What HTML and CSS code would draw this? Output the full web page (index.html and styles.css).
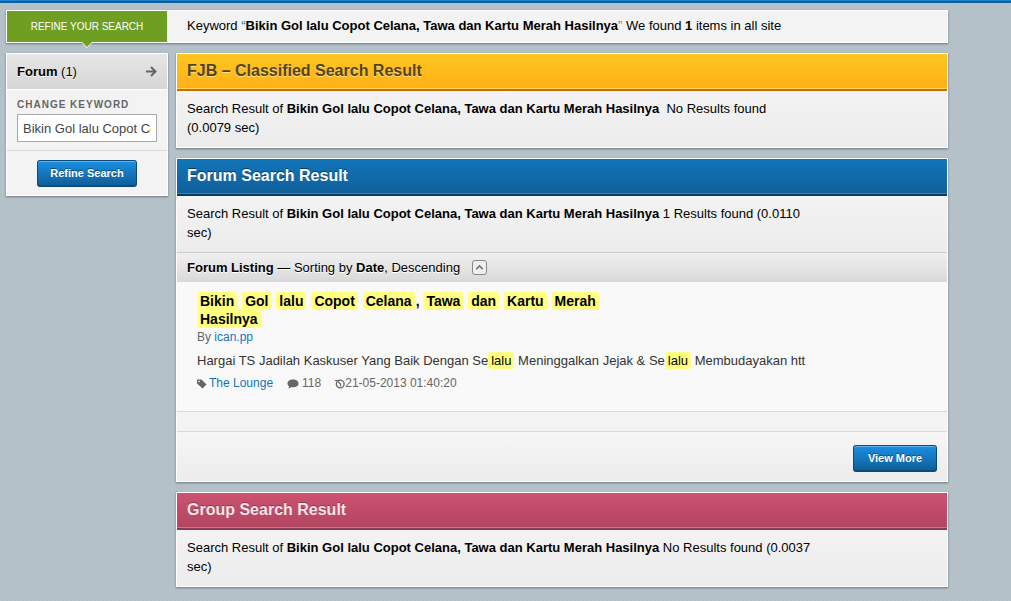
FILE: index.html
```
<!DOCTYPE html>
<html lang="id">
<head>
<meta charset="utf-8">
<meta name="viewport" content="width=device-width, initial-scale=1">
<title>Search Result</title>
<link rel="stylesheet" href="styles.css">
</head>
<body>
<div class="topbar"></div>
<div class="page">
  <header class="summary panel">
    <h2 class="summary-label">REFINE YOUR SEARCH</h2>
    <p class="summary-text">Keyword <span class="quote-open">“</span><b>Bikin Gol lalu Copot Celana, Tawa dan Kartu Merah Hasilnya</b><span class="quote-close">”</span> We found <b>1</b> items in all site</p>
  </header>
  <div class="columns">
    <aside class="sidebar panel">
      <a class="category" href="#forum">
        <span><b>Forum</b> (1)</span>
        <svg class="arrow" viewBox="0 0 11 11" aria-hidden="true"><path d="M0 5.500H9M5 1L9.500 5.500L5 10" fill="none" stroke="#666" stroke-width="2"/></svg>
      </a>
      <form class="refine">
        <div class="field">
          <label for="keyword">CHANGE KEYWORD</label>
          <input id="keyword" type="text" value="Bikin Gol lalu Copot Celana, Tawa dan Kartu Merah Hasilnya">
        </div>
        <div class="refine-action"><button class="button" type="button">Refine Search</button></div>
      </form>
    </aside>
    <main class="results">
      <section class="panel">
        <h2 class="head head-fjb">FJB – Classified Search Result</h2>
        <div class="info"><p>Search Result of <b>Bikin Gol lalu Copot Celana, Tawa dan Kartu Merah Hasilnya</b>&nbsp; No Results found (0.0079&nbsp;sec)</p></div>
      </section>
      <section class="panel" id="forum">
        <h2 class="head head-forum">Forum Search Result</h2>
        <div class="info"><p>Search Result of <b>Bikin Gol lalu Copot Celana, Tawa dan Kartu Merah Hasilnya</b> 1 Results found (0.0110 sec)</p></div>
        <div class="sorting">
          <span><b>Forum Listing</b> — Sorting by <b>Date</b>, Descending</span>
          <button class="toggle" type="button" aria-label="Change sort order"><svg viewBox="0 0 12 12" aria-hidden="true"><path d="M3 7.5L6 4.5L9 7.5" fill="none" stroke="#777" stroke-width="1.5"/></svg></button>
        </div>
        <article class="item">
          <h3 class="item-title"><mark>Bikin</mark> <mark>Gol</mark> <mark>lalu</mark> <mark>Copot</mark> <mark>Celana</mark>, <mark>Tawa</mark> <mark>dan</mark> <mark>Kartu</mark> <mark>Merah</mark> <mark>Hasilnya</mark></h3>
          <p class="author">By <a href="#author">ican.pp</a></p>
          <p class="excerpt">Hargai TS Jadilah Kaskuser Yang Baik Dengan Se<mark>lalu</mark> Meninggalkan Jejak &amp; Se<mark>lalu</mark> Membudayakan htt</p>
          <div class="meta">
            <span class="meta-tag"><svg viewBox="0 0 10 10" aria-hidden="true"><path d="M0 .5H4.500L9.500 5.500L5.500 9.500L0 4.500Z" fill="#666"/><circle cx="2" cy="2.500" r=".8" fill="#f9f9f9"/></svg><a href="#lounge">The Lounge</a></span>
            <span class="meta-count"><svg viewBox="0 0 12 10" aria-hidden="true"><path d="M6 .5C9 .5 11.500 2 11.500 4.500S9 8.300 6 8.300C5.300 8.300 4.800 8.200 4.200 8.100C3.300 9 2.300 9.500 1.200 9.500C1.800 8.900 2 8.200 2 7.300C1 6.500.5 5.600.5 4.500C.5 2 3 .5 6 .5Z" fill="#666"/></svg>118</span>
            <span class="meta-time"><svg viewBox="0 0 10 10" aria-hidden="true"><circle cx="5.200" cy="5" r="3.900" fill="none" stroke="#666" stroke-width="1.300"/><path d="M3 2.500L5.500 5V7.500M0 1.500H3" fill="none" stroke="#666" stroke-width="1.200"/></svg>21-05-2013 01:40:20</span>
          </div>
        </article>
        <div class="spacer"></div>
        <div class="more"><button class="button" type="button">View More</button></div>
      </section>
      <section class="panel">
        <h2 class="head head-group">Group Search Result</h2>
        <div class="info"><p>Search Result of <b>Bikin Gol lalu Copot Celana, Tawa dan Kartu Merah Hasilnya</b> No Results found (0.0037 sec)</p></div>
      </section>
    </main>
  </div>
</div>
</body>
</html>
```

FILE: styles.css
```
* { box-sizing: border-box; }

body {
  margin: 0;
  min-height: 100vh;
  background: linear-gradient(135deg, #b7c4cc 25%, #b1bec6 25% 50%, #b7c4cc 50% 75%, #b1bec6 75%) 0 0 / 4px 4px;
  color: #000;
  font: 13px/19px "Liberation Sans", Arial, sans-serif;
}

h2, h3, p { margin: 0; }

a { color: #0f75c2; text-decoration: none; }

.topbar {
  height: 3px;
  background: #1c83cd;
  border-bottom: 2px solid #105f99;
}

.page {
  display: flex;
  flex-direction: column;
  gap: 10px;
  max-width: 948px;
  padding: 7px 0 14px 6px;
}

.panel {
  background: #f3f3f3;
  border: 1px solid #fff;
  box-shadow: 0 1px 2px rgba(0, 0, 0, .4);
}

.summary { display: flex; }

.summary-label {
  position: relative;
  flex: 0 0 160px;
  background: #6f9f22;
  color: #fff;
  font-size: 10px;
  font-weight: normal;
  line-height: 31px;
  text-align: center;
}

/* Pointer under the green label, outlined in white */
.summary-label::before,
.summary-label::after {
  content: "";
  position: absolute;
  top: 100%;
  left: 50%;
  margin-left: -6px;
  border: 6px solid transparent;
  border-top-color: #fff;
  border-bottom: 0;
}

.summary-label::after {
  margin-left: -5px;
  border-width: 5px 5px 0;
  border-top-color: #6f9f22;
}

.summary-text { padding: 5px 20px 7px; }

.quote-open { color: #1173b5; }
.quote-close { color: #c63; }

.columns {
  display: flex;
  align-items: flex-start;
  gap: 8px;
}

.sidebar { flex: 0 0 162px; }

.category {
  display: flex;
  align-items: center;
  justify-content: space-between;
  height: 36px;
  padding: 0 10px;
  background: linear-gradient(#e6e6e6, #d6d6d6);
  border-bottom: 1px solid #fff;
  color: #000;
  text-shadow: 0 1px 0 #fff;
}

.arrow { width: 11px; height: 11px; }

.field { padding: 7px 10px 8px; }

.field label {
  display: block;
  color: #666;
  font-size: 10px;
  font-weight: bold;
  letter-spacing: 1px;
  line-height: 15px;
}

.field input {
  display: block;
  width: 100%;
  height: 28px;
  margin-top: 2px;
  padding: 0 5px;
  border: 1px solid #aaa;
  background: #fff;
  color: #444;
  font: inherit;
}

.refine-action {
  display: flex;
  justify-content: center;
  padding: 9px 10px 8px;
  border-top: 1px solid #d9d9d9;
}

.button {
  min-width: 84px;
  height: 27px;
  padding: 0 12px;
  border: 1px solid #0d4a78;
  border-bottom-width: 2px;
  border-radius: 3px;
  background: linear-gradient(#1a8fe3, #105f99);
  box-shadow: inset 0 1px 0 #62b3ee;
  color: #fff;
  font: bold 11px/22px "Liberation Sans", Arial, sans-serif;
  text-shadow: 0 -1px 0 rgba(0, 0, 0, .4);
}

.results {
  display: flex;
  flex: 1;
  flex-direction: column;
  gap: 10px;
  min-width: 0;
}

.head {
  height: 37px;
  padding: 0 10px;
  border-bottom: 2px solid;
  font-size: 16px;
  line-height: 33px;
}

.head-fjb {
  background: linear-gradient(#ffc61e, #ffb019);
  border-color: #c96c0c;
  box-shadow: inset 0 -1px 0 #ffd34b;
  color: #54431f;
  text-shadow: 0 1px 0 #ffe08a;
}

.head-forum {
  background: linear-gradient(#1175b9, #10609a);
  border-color: #083c63;
  box-shadow: inset 0 -1px 0 #2d86c2;
  color: #fff;
  text-shadow: 0 -1px 0 #083c63;
}

.head-group {
  background: linear-gradient(#cd5272, #b24560);
  border-color: #8f3850;
  box-shadow: inset 0 -1px 0 #dd6b8a;
  color: #f5e3e8;
  text-shadow: 0 -1px 0 #8f3850;
}

.info {
  padding: 8px 10px 10px;
  background: linear-gradient(#f3f3f3, #ececec);
}

.info p { max-width: 640px; }

.sorting {
  display: flex;
  align-items: center;
  gap: 12px;
  height: 30px;
  padding: 0 10px;
  background: linear-gradient(#f0f0f0, #d9d9d9);
  border-top: 1px solid #ccc;
  text-shadow: 0 1px 0 #fff;
}

.toggle {
  display: flex;
  width: 15px;
  height: 15px;
  padding: 0;
  border: 1px solid #888;
  border-radius: 3px;
  background: #eee;
}

.toggle svg { width: 13px; height: 13px; }

.item {
  padding: 10px 20px 18px;
  background: #f9f9f9;
  border-bottom: 1px solid #d9d9d9;
  font-size: 12px;
  color: #666;
}

.item-title {
  max-width: 420px;
  color: #000;
  font-size: 14px;
  line-height: 18px;
}

.item-title mark { margin-right: 1px; }

mark {
  padding: 1px 3px;
  border-radius: 3px;
  background: #ffff80;
  color: #000;
}

.author { line-height: 18px; }

.excerpt {
  margin-top: 4px;
  color: #333;
  font-size: 13px;
  line-height: 22px;
}

.meta {
  display: flex;
  gap: 14px;
  margin-top: 2px;
  line-height: 19px;
}

.meta span {
  display: flex;
  align-items: center;
}

.meta svg { height: 10px; }
.meta-tag { gap: 2px; }
.meta-count { gap: 3px; }

.spacer {
  height: 20px;
  border-bottom: 1px solid #d9d9d9;
}

.more {
  display: flex;
  justify-content: flex-end;
  padding: 13px 10px 9px;
  background: linear-gradient(#f6f6f6, #ececec);
}
```
